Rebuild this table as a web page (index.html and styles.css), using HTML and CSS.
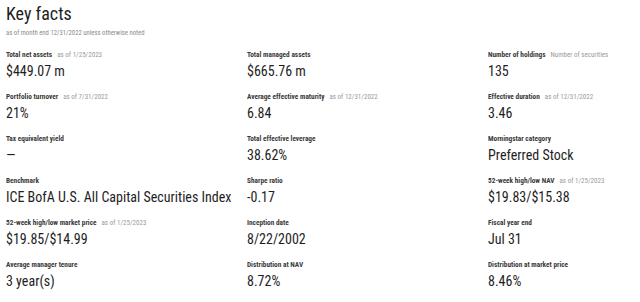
FILE: index.html
```html
<!DOCTYPE html>
<html lang="en">
<head>
<meta charset="utf-8">
<title>Key facts</title>
<link rel="stylesheet" href="styles.css">
</head>
<body>
<section class="key-facts">
  <h1 class="title">Key facts</h1>
  <p class="subtitle">as of month end 12/31/2022 unless otherwise noted</p>
  <div class="facts-grid">
    <div class="fact"><div class="label"><b>Total net assets</b><span class="note">as of 1/25/2023</span></div><div class="value">$449.07 m</div></div>
    <div class="fact"><div class="label"><b>Total managed assets</b></div><div class="value">$665.76 m</div></div>
    <div class="fact"><div class="label"><b>Number of holdings</b><span class="note">Number of securities</span></div><div class="value">135</div></div>

    <div class="fact"><div class="label"><b>Portfolio turnover</b><span class="note">as of 7/31/2022</span></div><div class="value">21%</div></div>
    <div class="fact"><div class="label"><b>Average effective maturity</b><span class="note">as of 12/31/2022</span></div><div class="value">6.84</div></div>
    <div class="fact"><div class="label"><b>Effective duration</b><span class="note">as of 12/31/2022</span></div><div class="value">3.46</div></div>

    <div class="fact"><div class="label"><b>Tax equivalent yield</b></div><div class="value">—</div></div>
    <div class="fact"><div class="label"><b>Total effective leverage</b></div><div class="value">38.62%</div></div>
    <div class="fact"><div class="label"><b>Morningstar category</b></div><div class="value">Preferred Stock</div></div>

    <div class="fact"><div class="label"><b>Benchmark</b></div><div class="value">ICE BofA U.S. All Capital Securities Index</div></div>
    <div class="fact"><div class="label"><b>Sharpe ratio</b></div><div class="value">-0.17</div></div>
    <div class="fact"><div class="label"><b>52-week high/low NAV</b><span class="note">as of 1/25/2023</span></div><div class="value">$19.83/$15.38</div></div>

    <div class="fact"><div class="label"><b>52-week high/low market price</b><span class="note">as of 1/25/2023</span></div><div class="value">$19.85/$14.99</div></div>
    <div class="fact"><div class="label"><b>Inception date</b></div><div class="value">8/22/2002</div></div>
    <div class="fact"><div class="label"><b>Fiscal year end</b></div><div class="value">Jul 31</div></div>

    <div class="fact"><div class="label"><b>Average manager tenure</b></div><div class="value">3 year(s)</div></div>
    <div class="fact"><div class="label"><b>Distribution at NAV</b></div><div class="value">8.72%</div></div>
    <div class="fact"><div class="label"><b>Distribution at market price</b></div><div class="value">8.46%</div></div>
  </div>
</section>
</body>
</html>
```
FILE: styles.css
```css
html, body {
  margin: 0;
  padding: 0;
  background: #ffffff;
}
body {
  font-family: "Roboto Condensed", "Liberation Sans Narrow", "Arial Narrow", sans-serif;
  color: #222222;
  overflow: hidden;
}
.key-facts {
  padding: 2px 0 0 6px;
}
.title {
  margin: 0;
  font-size: 18px;
  line-height: 24px;
  font-weight: 400;
  color: #1e1e1e;
}
.subtitle {
  margin: 2px 0 0;
  font-size: 6.7px;
  line-height: 10px;
  color: #8a8a8a;
}
.facts-grid {
  margin-top: 12px;
  display: grid;
  grid-template-columns: 241px 241px 1fr;
}
.fact {
  margin-bottom: 11px;
}
.label {
  font-size: 7.3px;
  line-height: 10px;
  white-space: nowrap;
  display: flex;
  gap: 5px;
}
.label b {
  font-weight: 700;
  color: #3a3a3a;
}
.note {
  color: #9a9a9a;
  font-size: 7px;
}
.value {
  margin-top: 1px;
  font-size: 14px;
  line-height: 20px;
  color: #1e1e1e;
  white-space: nowrap;
}
```
